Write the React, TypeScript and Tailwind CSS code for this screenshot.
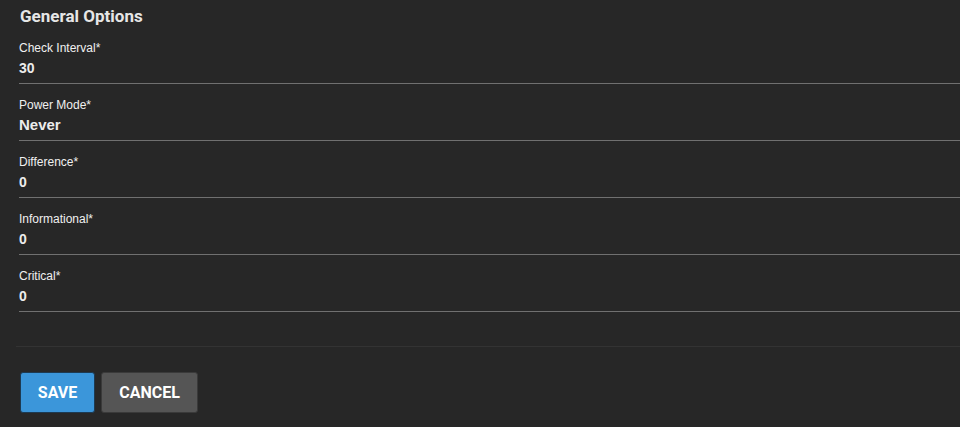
const fields = [
  { label: 'Check Interval*', value: '30', big: false },
  { label: 'Power Mode*', value: 'Never', big: true },
  { label: 'Difference*', value: '0', big: false },
  { label: 'Informational*', value: '0', big: false },
  { label: 'Critical*', value: '0', big: false },
]

export default function App() {
  return (
    <div className="h-[427px] w-[960px] overflow-hidden bg-[#272727] text-[#f2f2f2]">
      <div className="pl-5 pt-[4px]">
        <h2 className="font-['Roboto',sans-serif] text-[17px] font-bold leading-6 text-[#e6e6e6]">
          General Options
        </h2>

        <div className="-ml-px mt-[12px]">
          {fields.map((f, i) => (
            <div key={f.label} className={i === 0 ? '' : 'mt-[13px]'}>
              <div className="font-['Liberation_Sans',Arial,sans-serif] text-[12px] leading-4 text-[#f0f0f0]">
                {f.label}
              </div>
              <div
                className={
                  'mt-[2px] border-b border-[#707070] pb-[5px] font-[\'Liberation_Sans\',Arial,sans-serif] font-bold leading-5 text-[#ececec] ' +
                  (f.big ? 'text-[15px]' : 'text-[14px]')
                }
              >
                {f.value}
              </div>
            </div>
          ))}
        </div>
      </div>

      <div className="ml-4 mt-[34px] border-t border-[#333333]" />

      <div className="flex gap-[6px] pl-5 pt-[25px]">
        <button className="h-[41px] w-[75px] rounded-[3px] border border-[#1d3a52] bg-[#3b96da] font-['Roboto',sans-serif] text-[16px] font-bold text-white">
          SAVE
        </button>
        <button className="h-[41px] w-[97px] rounded-[3px] border border-[#3a3a3a] bg-[#555555] font-['Roboto',sans-serif] text-[16px] font-bold text-white">
          CANCEL
        </button>
      </div>
    </div>
  )
}
